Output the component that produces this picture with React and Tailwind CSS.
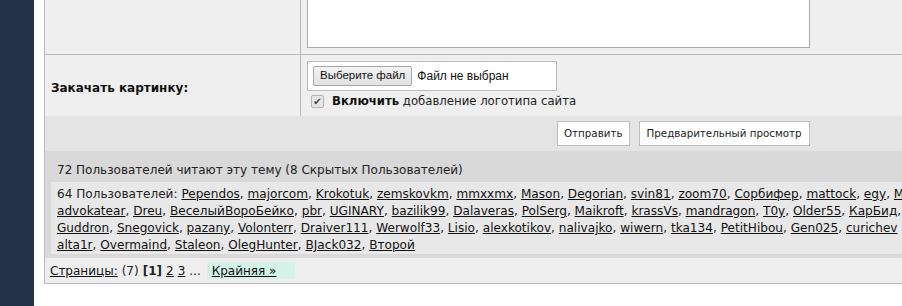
import React from "react";

const line1 = ["Pependos", "majorcom", "Krokotuk", "zemskovkm", "mmxxmx", "Mason", "Degorian", "svin81", "zoom70", "Сорбифер", "mattock", "egy", "M"];
const line2 = ["advokatear", "Dreu", "ВеселыйВороБейко", "pbr", "UGINARY", "bazilik99", "Dalaveras", "PolSerg", "Maikroft", "krassVs", "mandragon", "T0y", "Older55", "КарБид"];
const line3 = ["Guddron", "Snegovick", "pazany", "Volonterr", "Draiver111", "Werwolf33", "Lisio", "alexkotikov", "nalivajko", "wiwern", "tka134", "PetitHibou", "Gen025", "curichev"];
const line4 = ["alta1r", "Overmaind", "Staleon", "OlegHunter", "BJack032", "Второй"];

const Names = ({ names }) =>
  names.map((n, i) => (
    <React.Fragment key={n}>
      <a href="#" className="underline text-[#111]">
        {n}
      </a>
      {i < names.length - 1 ? ", " : ""}
    </React.Fragment>
  ));

const App = () => {
  return (
    <div className="flex h-[306px] overflow-hidden bg-white font-['DejaVu_Sans',sans-serif] text-[12px] text-[#222]">
      <div className="w-[34px] shrink-0 bg-[#26324a]" />
      <div className="ml-[10px] flex h-[284px] w-[900px] shrink-0 flex-col border-b border-l border-[#bbb] bg-[#efefef]">
        {/* textarea row */}
        <div className="flex h-[55px] border-b border-[#bbb]">
          <div className="w-[256px] shrink-0 border-r border-[#bbb]" />
          <div className="flex-1 pl-[6px]">
            <div className="-mt-[2px] h-[50px] w-[503px] border border-[#aaa] bg-white" />
          </div>
        </div>

        {/* upload row */}
        <div className="flex h-[61px]">
          <div className="flex w-[256px] shrink-0 items-center border-r border-[#bbb] pl-[6px] pt-[4px] font-bold text-[#111]">
            Закачать картинку:
          </div>
          <div className="flex-1 pl-[6px] pt-[6px]">
            <div className="flex h-[30px] w-[250px] items-center border border-[#bbb] bg-white pl-[5px] font-['Liberation_Sans',sans-serif] text-[11.5px] text-[#111]">
              <span className="flex h-[20px] items-center rounded-[2px] border border-[#a6a6a6] bg-gradient-to-b from-[#f3f3f3] to-[#e2e2e2] px-[6px]">
                Выберите файл
              </span>
              <span className="ml-[5px] text-[12px]">Файл не выбран</span>
            </div>
            <div className="mt-[2px] flex items-center text-[11.7px] text-[#222]">
              <span className="ml-[4px] flex h-[13px] w-[13px] items-center justify-center rounded-[2px] border border-[#b5b5b5] bg-[#e6e6e6] text-[10px] leading-none text-[#444]">
                ✔
              </span>
              <span className="ml-[8px]">
                <b className="text-[#111]">Включить</b> добавление логотипа сайта
              </span>
            </div>
          </div>
        </div>

        {/* buttons row */}
        <div className="flex h-[35px] items-start bg-[#e4e4e4] pl-[512px] pt-[5px] text-[10.3px] text-[#222]">
          <button className="h-[25px] border border-[#bdbdbd] bg-white px-[6px]">Отправить</button>
          <button className="ml-[9px] h-[25px] border border-[#bdbdbd] bg-white px-[7px]">Предварительный просмотр</button>
        </div>

        {/* who is reading */}
        <div className="bg-[#d9d9d9] pb-[4px] pl-[6px]">
          <div className="flex h-[31px] items-center pl-[6px] pt-[6px] text-[#222]">
            72 Пользователей читают эту тему (8 Скрытых Пользователей)
          </div>
          <div className="whitespace-nowrap bg-[#e8e8e8] pl-[6px] pt-[4px] text-[12.1px] leading-[17px] text-[#222]">
            <div>
              64 Пользователей: <Names names={line1} />
            </div>
            <div>
              <Names names={line2} />,
            </div>
            <div>
              <Names names={line3} />
            </div>
            <div>
              <Names names={line4} />
            </div>
          </div>
        </div>

        {/* pages */}
        <div className="flex flex-1 items-center bg-[#eeeeee] pl-[5px] text-[#222]">
          <a href="#" className="underline text-[#111]">
            Страницы:
          </a>
          <span className="ml-[4px]">(7)</span>
          <b className="ml-[4px]">[1]</b>
          <a href="#" className="ml-[4px] underline text-[#111]">
            2
          </a>
          <a href="#" className="ml-[4px] underline text-[#111]">
            3
          </a>
          <span className="ml-[4px]">...</span>
          <span className="ml-[6px] flex h-[17px] w-[88px] items-center bg-[#d5f2e8] pl-[5px]">
            <a href="#" className="underline text-[#111]">
              Крайняя »
            </a>
          </span>
        </div>
      </div>
    </div>
  );
};

export default App;
